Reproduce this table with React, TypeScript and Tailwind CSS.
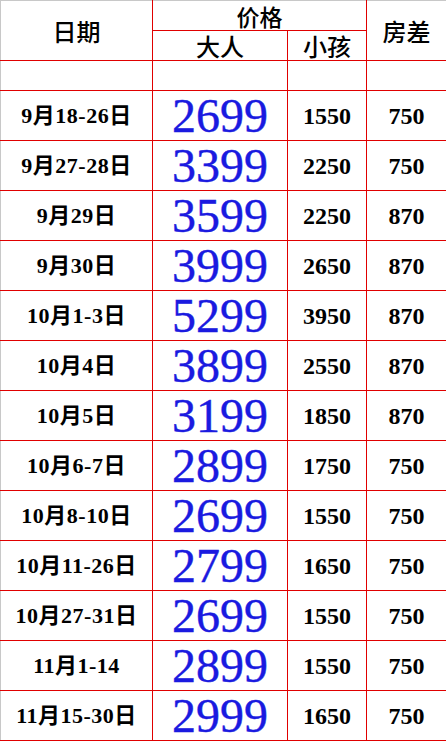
import React from "react";

interface PriceRow {
  date: string;
  adult: string;
  child: string;
  room: string;
}

const rows: PriceRow[] = [
  { date: "9月18-26日", adult: "2699", child: "1550", room: "750" },
  { date: "9月27-28日", adult: "3399", child: "2250", room: "750" },
  { date: "9月29日", adult: "3599", child: "2250", room: "870" },
  { date: "9月30日", adult: "3999", child: "2650", room: "870" },
  { date: "10月1-3日", adult: "5299", child: "3950", room: "870" },
  { date: "10月4日", adult: "3899", child: "2550", room: "870" },
  { date: "10月5日", adult: "3199", child: "1850", room: "870" },
  { date: "10月6-7日", adult: "2899", child: "1750", room: "750" },
  { date: "10月8-10日", adult: "2699", child: "1550", room: "750" },
  { date: "10月11-26日", adult: "2799", child: "1650", room: "750" },
  { date: "10月27-31日", adult: "2699", child: "1550", room: "750" },
  { date: "11月1-14", adult: "2899", child: "1550", room: "750" },
  { date: "11月15-30日", adult: "2999", child: "1650", room: "750" },
];

const serif = "font-['Liberation_Serif','Noto_Sans_CJK_SC',serif]";
const cell = "border border-[#e00000] p-0 text-center align-middle";

export default function App() {
  return (
    <div className="w-[446px] h-[741px] bg-white overflow-hidden">
      <table className="table-fixed border-collapse w-[446px] border-t border-l border-t-[#c8c8c8] border-l-[#c8c8c8]">
        <colgroup>
          <col className="w-[152px]" />
          <col className="w-[135px]" />
          <col className="w-[79px]" />
          <col className="w-[80px]" />
        </colgroup>
        <thead className="font-['Noto_Sans_CJK_SC',sans-serif] text-[24px] font-medium text-black">
          <tr className="h-[30px]">
            <th rowSpan={2} className={`${cell} border-l-[#c8c8c8] border-t-[#c8c8c8] font-medium leading-[28px]`}>
              日期
            </th>
            <th colSpan={2} className={`${cell} border-t-[#c8c8c8] text-[23px] font-medium leading-[28px]`}>
              价格
            </th>
            <th rowSpan={2} className={`${cell} border-t-[#c8c8c8] font-medium leading-[28px]`}>
              房差
            </th>
          </tr>
          <tr className="h-[30px]">
            <th className={`${cell} font-medium leading-[28px]`}>大人</th>
            <th className={`${cell} font-medium leading-[28px]`}>小孩</th>
          </tr>
        </thead>
        <tbody className={serif}>
          <tr className="h-[30px]">
            <td className={`${cell} border-l-[#c8c8c8]`}></td>
            <td className={cell}></td>
            <td className={cell}></td>
            <td className={cell}></td>
          </tr>
          {rows.map((r, i) => (
            <tr key={i} className="h-[50px]">
              <td className={`${cell} border-l-[#c8c8c8] text-[22px] tracking-[0.5px] font-bold text-black leading-none`}>
                {r.date}
              </td>
              <td className={`${cell} text-[48px] text-[#1a1ae0] leading-none [-webkit-text-stroke:0.4px_#1a1ae0]`}>
                {r.adult}
              </td>
              <td className={`${cell} text-[24px] font-bold text-black leading-none`}>{r.child}</td>
              <td className={`${cell} text-[24px] font-bold text-black leading-none`}>{r.room}</td>
            </tr>
          ))}
        </tbody>
      </table>
    </div>
  );
}
